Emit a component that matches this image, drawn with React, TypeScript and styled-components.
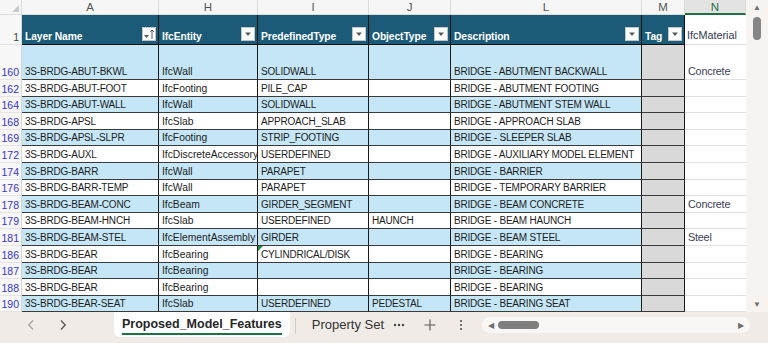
import React from "react";
import styled, { createGlobalStyle, css } from "styled-components";

const GlobalStyle = createGlobalStyle`
  html, body {
    margin: 0;
    padding: 0;
    background: #f3efeb;
  }
  body {
    font-family: "Liberation Sans", Arial, sans-serif;
  }
`;

// column widths: row header, A, H, I, J, L, M, N
const COLS = "22px 137px 99px 111px 82px 191px 43px 61px";

const Page = styled.div`
  width: 768px;
  height: 343px;
  display: flex;
  flex-direction: column;
  overflow: hidden;
  background: #f3efeb;
`;

const SheetArea = styled.div`
  display: flex;
  height: 312px;
  overflow: hidden;
`;

const Grid = styled.div`
  display: grid;
  grid-template-columns: ${COLS};
  grid-template-rows: 15px 30px 35px repeat(14, 16.6px);
  width: 746px;
  background: #fff;
`;

const Corner = styled.div`
  background: #f6f6f6;
  border-right: 1px solid #dcdcdc;
  border-bottom: 1px solid #dcdcdc;
  position: relative;
  &::after {
    content: "";
    position: absolute;
    right: 2px;
    bottom: 2px;
    border-left: 7px solid transparent;
    border-bottom: 7px solid #c9c9c9;
  }
`;

const ColLetter = styled.div<{ $active?: boolean }>`
  background: ${(p) => (p.$active ? "#e3e3e3" : "#f6f6f6")};
  border-right: 1px solid #dcdcdc;
  border-bottom: ${(p) => (p.$active ? "2px solid #1e7145" : "1px solid #dcdcdc")};
  color: ${(p) => (p.$active ? "#1e7145" : "#555")};
  font-size: 11.5px;
  display: flex;
  align-items: center;
  justify-content: center;
  box-sizing: border-box;
`;

const RowNum = styled.div<{ $filtered?: boolean }>`
  background: #f7f7f7;
  border-right: 1px solid #d6d6d6;
  border-bottom: 1px solid #e4e4e4;
  color: ${(p) => (p.$filtered ? "#3434d6" : "#444")};
  font-size: 10.5px;
  display: flex;
  align-items: flex-end;
  justify-content: flex-end;
  padding: 0 2px 1px 0;
  box-sizing: border-box;
`;

const HeadCell = styled.div`
  background: #1c5b78;
  color: #fff;
  font-weight: bold;
  font-size: 10.3px;
  letter-spacing: -0.1px;
  border-right: 1px solid #111;
  border-bottom: 1px solid #111;
  display: flex;
  align-items: flex-end;
  justify-content: space-between;
  padding: 0 2px 1px 3px;
  box-sizing: border-box;
  white-space: nowrap;
  overflow: hidden;
`;

const HeadLabel = styled.span`
  line-height: 12px;
`;

const FilterBtn = styled.div`
  width: 14px;
  height: 14px;
  margin-bottom: 2px;
  background: #fff;
  border: 1px solid #c4c4c4;
  box-sizing: border-box;
  display: flex;
  align-items: center;
  justify-content: center;
  flex-shrink: 0;
`;

const PlainHead = styled.div`
  background: #fff;
  color: #333850;
  font-size: 10.8px;
  border-bottom: 1px solid #e1e1e1;
  display: flex;
  align-items: flex-end;
  padding: 0 0 3px 2px;
  box-sizing: border-box;
`;

type Kind = "data" | "tag" | "free";

const Cell = styled.div<{ $band: boolean; $kind: Kind; $mixed?: boolean }>`
  font-size: ${(p) => (p.$mixed ? "10.3px" : "10px")};
  letter-spacing: ${(p) => (p.$mixed ? "0" : "-0.2px")};
  color: #1c1c1c;
  white-space: nowrap;
  overflow: hidden;
  display: flex;
  align-items: flex-end;
  padding: 0 0 2px 3px;
  box-sizing: border-box;
  position: relative;
  ${(p) =>
    p.$kind === "data" &&
    css`
      background: ${p.$band ? "#c4e6f6" : "#fff"};
      border-right: 1px solid #1a1a1a;
      border-bottom: 1px solid #3a3a3a;
    `}
  ${(p) =>
    p.$kind === "tag" &&
    css`
      background: #d9d9d9;
      border-right: 1px solid #1a1a1a;
      border-bottom: 1px solid #3a3a3a;
    `}
  ${(p) =>
    p.$kind === "free" &&
    css`
      background: #fff;
      color: #3a3d55;
      font-size: 10.8px;
      border-bottom: 1px solid #e1e1e1;
    `}
`;

const ErrorMark = styled.span`
  position: absolute;
  left: 0;
  top: 0;
  border-top: 5px solid #1e8a3c;
  border-right: 5px solid transparent;
`;

const VScroll = styled.div`
  width: 22px;
  display: flex;
  flex-direction: column;
  align-items: center;
  padding: 4px 0 3px;
  box-sizing: border-box;
  background: #f6f3f0;
`;

const Arrow = styled.div`
  color: #6e6e6e;
  font-size: 8px;
  line-height: 8px;
`;

const VThumb = styled.div`
  width: 8px;
  height: 23px;
  border-radius: 4px;
  background: #858585;
  margin-top: 5px;
  flex: 0 0 auto;
`;

const Spacer = styled.div`
  flex: 1;
`;

const TabBar = styled.div`
  height: 31px;
  display: flex;
  align-items: flex-start;
  background: #f0ebe6;
  color: #333;
`;

const NavBtn = styled.div<{ $dim?: boolean }>`
  width: 32px;
  height: 26px;
  display: flex;
  align-items: center;
  justify-content: center;
  color: ${(p) => (p.$dim ? "#a5a5a5" : "#555")};
`;

const NavGroup = styled.div`
  display: flex;
  padding-left: 15px;
  width: 114px;
  box-sizing: border-box;
`;

const ActiveTab = styled.div`
  height: 25px;
  padding: 0 8px;
  background: #fff;
  border-radius: 0 0 6px 6px;
  display: flex;
  flex-direction: column;
  justify-content: center;
  font-weight: bold;
  font-size: 12.5px;
  color: #262626;
`;

const TabLabel = styled.span`
  padding-bottom: 2px;
  border-bottom: 2.5px solid #1e7145;
  margin-top: 3px;
`;

const TabSep = styled.div`
  width: 1px;
  height: 16px;
  background: #cfcac5;
  margin: 6px 16px 0 5px;
`;

const Tab = styled.div`
  font-size: 13px;
  color: #333;
  height: 25px;
  display: flex;
  align-items: center;
`;

const IconBtn = styled.div<{ $w: number }>`
  width: ${(p) => p.$w}px;
  height: 25px;
  display: flex;
  align-items: center;
  justify-content: center;
  color: #555;
`;

const HScroll = styled.div`
  margin: 5px 0 0 6px;
  width: 268px;
  height: 16px;
  border-radius: 8px;
  background: #f9f7f5;
  display: flex;
  align-items: center;
  padding: 0 6px;
  box-sizing: border-box;
  gap: 4px;
`;

const HThumb = styled.div`
  width: 41px;
  height: 8px;
  border-radius: 4px;
  background: #7e7e7e;
`;

const HArrow = styled.div`
  color: #6e6e6e;
  font-size: 8px;
`;

type Row = [number, string, string, string, string, string, string];

const rows: Row[] = [
  [160, "3S-BRDG-ABUT-BKWL", "IfcWall", "SOLIDWALL", "", "BRIDGE - ABUTMENT BACKWALL", "Concrete"],
  [162, "3S-BRDG-ABUT-FOOT", "IfcFooting", "PILE_CAP", "", "BRIDGE - ABUTMENT FOOTING", ""],
  [164, "3S-BRDG-ABUT-WALL", "IfcWall", "SOLIDWALL", "", "BRIDGE - ABUTMENT STEM WALL", ""],
  [168, "3S-BRDG-APSL", "IfcSlab", "APPROACH_SLAB", "", "BRIDGE - APPROACH SLAB", ""],
  [169, "3S-BRDG-APSL-SLPR", "IfcFooting", "STRIP_FOOTING", "", "BRIDGE - SLEEPER SLAB", ""],
  [172, "3S-BRDG-AUXL", "IfcDiscreteAccessory", "USERDEFINED", "", "BRIDGE - AUXILIARY MODEL ELEMENT", ""],
  [174, "3S-BRDG-BARR", "IfcWall", "PARAPET", "", "BRIDGE - BARRIER", ""],
  [176, "3S-BRDG-BARR-TEMP", "IfcWall", "PARAPET", "", "BRIDGE - TEMPORARY BARRIER", ""],
  [178, "3S-BRDG-BEAM-CONC", "IfcBeam", "GIRDER_SEGMENT", "", "BRIDGE - BEAM CONCRETE", "Concrete"],
  [179, "3S-BRDG-BEAM-HNCH", "IfcSlab", "USERDEFINED", "HAUNCH", "BRIDGE - BEAM HAUNCH", ""],
  [181, "3S-BRDG-BEAM-STEL", "IfcElementAssembly", "GIRDER", "", "BRIDGE - BEAM STEEL", "Steel"],
  [186, "3S-BRDG-BEAR", "IfcBearing", "CYLINDRICAL/DISK", "", "BRIDGE - BEARING", ""],
  [187, "3S-BRDG-BEAR", "IfcBearing", "", "", "BRIDGE - BEARING", ""],
  [188, "3S-BRDG-BEAR", "IfcBearing", "", "", "BRIDGE - BEARING", ""],
  [190, "3S-BRDG-BEAR-SEAT", "IfcSlab", "USERDEFINED", "PEDESTAL", "BRIDGE - BEARING SEAT", ""],
];

const letters = ["A", "H", "I", "J", "L", "M", "N"];
const headers = ["Layer Name", "IfcEntity", "PredefinedType", "ObjectType", "Description", "Tag"];

const DropIcon = () => (
  <svg width="8" height="6" viewBox="0 0 8 6">
    <path d="M1 1.5h6L4 5z" fill="#595959" />
  </svg>
);

const SortIcon = () => (
  <svg width="12" height="12" viewBox="0 0 12 12">
    <path d="M1 7h5L3.5 10z" fill="#595959" />
    <path d="M9 2v9M7.2 3.8L9 2l1.8 1.8" stroke="#595959" strokeWidth="1" fill="none" />
  </svg>
);

const Chevron = ({ dir }: { dir: "left" | "right" }) => (
  <svg width="8" height="12" viewBox="0 0 8 12">
    <path
      d={dir === "left" ? "M6 1.5L1.8 6 6 10.5" : "M2 1.5L6.2 6 2 10.5"}
      stroke="currentColor"
      strokeWidth="1.3"
      fill="none"
    />
  </svg>
);

const MoreIcon = () => (
  <svg width="12" height="4" viewBox="0 0 12 4">
    <circle cx="2" cy="2" r="1.2" fill="#444" />
    <circle cx="6" cy="2" r="1.2" fill="#444" />
    <circle cx="10" cy="2" r="1.2" fill="#444" />
  </svg>
);

const PlusIcon = () => (
  <svg width="12" height="12" viewBox="0 0 12 12">
    <path d="M6 0.5v11M0.5 6h11" stroke="#555" strokeWidth="1.1" />
  </svg>
);

const KebabIcon = () => (
  <svg width="4" height="12" viewBox="0 0 4 12">
    <circle cx="2" cy="2" r="1.1" fill="#555" />
    <circle cx="2" cy="6" r="1.1" fill="#555" />
    <circle cx="2" cy="10" r="1.1" fill="#555" />
  </svg>
);

export default function App() {
  return (
    <>
      <GlobalStyle />
      <Page>
        <SheetArea>
          <Grid>
            <Corner />
            {letters.map((l) => (
              <ColLetter key={l} $active={l === "N"}>
                {l}
              </ColLetter>
            ))}

            <RowNum>1</RowNum>
            {headers.map((h, i) => (
              <HeadCell key={h}>
                <HeadLabel>{h}</HeadLabel>
                <FilterBtn>{i === 0 ? <SortIcon /> : <DropIcon />}</FilterBtn>
              </HeadCell>
            ))}
            <PlainHead>IfcMaterial</PlainHead>

            {rows.map((r, idx) => {
              const band = idx % 2 === 0;
              const [num, a, h, i, j, l, n] = r;
              return (
                <React.Fragment key={num}>
                  <RowNum $filtered>{num}</RowNum>
                  <Cell $band={band} $kind="data">{a}</Cell>
                  <Cell $band={band} $kind="data" $mixed>{h}</Cell>
                  <Cell $band={band} $kind="data">
                    {num === 186 && <ErrorMark />}
                    {i}
                  </Cell>
                  <Cell $band={band} $kind="data">{j}</Cell>
                  <Cell $band={band} $kind="data">{l}</Cell>
                  <Cell $band={band} $kind="tag" />
                  <Cell $band={band} $kind="free">{n}</Cell>
                </React.Fragment>
              );
            })}
          </Grid>
          <VScroll>
            <Arrow>▲</Arrow>
            <VThumb />
            <Spacer />
            <Arrow>▼</Arrow>
          </VScroll>
        </SheetArea>

        <TabBar>
          <NavGroup>
            <NavBtn $dim>
              <Chevron dir="left" />
            </NavBtn>
            <NavBtn>
              <Chevron dir="right" />
            </NavBtn>
          </NavGroup>
          <ActiveTab>
            <TabLabel>Proposed_Model_Features</TabLabel>
          </ActiveTab>
          <TabSep />
          <Tab>Property Set</Tab>
          <IconBtn $w={30}>
            <MoreIcon />
          </IconBtn>
          <IconBtn $w={32}>
            <PlusIcon />
          </IconBtn>
          <IconBtn $w={30}>
            <KebabIcon />
          </IconBtn>
          <HScroll>
            <HArrow>◀</HArrow>
            <HThumb />
            <Spacer />
            <HArrow>▶</HArrow>
          </HScroll>
        </TabBar>
      </Page>
    </>
  );
}
